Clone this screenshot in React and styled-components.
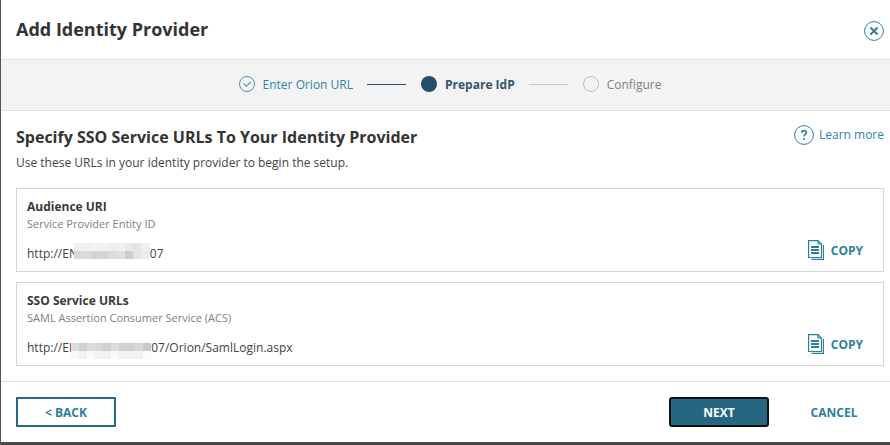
import React from "react";
import styled, { createGlobalStyle } from "styled-components";

const GlobalStyle = createGlobalStyle`
  html, body {
    margin: 0;
    padding: 0;
    background: #fff;
  }
  body {
    font-family: "Open Sans", "Liberation Sans", sans-serif;
    color: #333;
  }
`;

const Page = styled.div`
  width: 890px;
  height: 445px;
  box-sizing: border-box;
  overflow: hidden;
  background: #fff;
  border-left: 1px solid #555;
  border-bottom: 3px solid #484848;
  display: flex;
  flex-direction: column;
`;

const Header = styled.header`
  height: 59px;
  flex: none;
  display: flex;
  justify-content: space-between;
  padding: 0 6px 0 15px;
`;

const Title = styled.h1`
  margin: 20px 0 0;
  font-size: 18px;
  line-height: 18px;
  font-weight: 700;
  color: #333;
`;

const CloseButton = styled.button`
  border: 0;
  background: none;
  padding: 0;
  margin: 21px 0 0;
  width: 20px;
  height: 20px;
  color: #2e7f9c;
`;

const Stepper = styled.nav`
  flex: none;
  height: 48px;
  background: #f3f3f3;
  border-top: 1px solid #e0e0e0;
  border-bottom: 1px solid #e0e0e0;
  display: flex;
  align-items: center;
  justify-content: center;
  padding: 0 0 2px 9px;
`;

const StepLabel = styled.span`
  font-size: 12px;
  margin-left: 8px;
  color: ${(p) => p.$color};
  font-weight: ${(p) => (p.$bold ? 700 : 400)};
`;

const StepLine = styled.span`
  width: 39px;
  height: 1px;
  margin: 1px 15px 0 14px;
  background: ${(p) => p.$color};
`;

const DoneDot = styled.svg`
  width: 16px;
  height: 16px;
  flex: none;
`;

const ActiveDot = styled.span`
  width: 16px;
  height: 16px;
  border-radius: 50%;
  background: #224d6b;
`;

const PendingDot = styled.span`
  width: 14px;
  height: 14px;
  border: 1px solid #bdbdbd;
  border-radius: 50%;
`;

const Content = styled.main`
  flex: 1;
  padding: 0 6px 0 15px;
  display: flex;
  flex-direction: column;
`;

const HeadingRow = styled.div`
  display: flex;
  justify-content: space-between;
  align-items: flex-start;
  margin-top: 14px;
`;

const Heading = styled.h2`
  margin: 1px 0 0;
  font-size: 16px;
  line-height: 22px;
  font-weight: 700;
  color: #333;
`;

const LearnMore = styled.a`
  display: flex;
  align-items: center;
  gap: 5px;
  font-size: 12px;
  line-height: 20px;
  color: #2e86a8;
`;

const HelpIcon = styled.svg`
  width: 20px;
  height: 20px;
`;

const Intro = styled.p`
  margin: 7px 0 0;
  font-size: 12px;
  line-height: 16px;
  color: #444;
`;

const Card = styled.section`
  height: 84px;
  box-sizing: border-box;
  margin-top: ${(p) => p.$top}px;
  border: 1px solid #d6d6d6;
  padding: 10px 10px 0;
  display: flex;
  flex-direction: column;
`;

const CardTitle = styled.h3`
  margin: 0;
  font-size: 12px;
  line-height: 16px;
  font-weight: 700;
  color: #3a3a3a;
`;

const CardSub = styled.div`
  margin-top: 1px;
  font-size: 11px;
  line-height: 16px;
  color: #808080;
`;

const UrlRow = styled.div`
  display: flex;
  align-items: center;
  justify-content: space-between;
  margin-top: 14px;
  padding-right: 10px;
`;

const Url = styled.div`
  display: flex;
  align-items: center;
  font-size: 12px;
  line-height: 16px;
  color: #444;
`;

/* sits over the url text, the blur in the picture covers part of a letter */
const Redaction = styled.span`
  display: grid;
  grid-template-columns: repeat(${(p) => p.$cols}, ${(p) => p.$cell}px);
  grid-auto-rows: 8px;
  height: 16px;
  margin: ${(p) => p.$shift}px 0 ${(p) => -p.$shift}px ${(p) => p.$pull}px;
`;

const Pixel = styled.i`
  display: block;
`;

const CopyButton = styled.button`
  display: flex;
  align-items: center;
  gap: 7px;
  border: 0;
  background: none;
  padding: 0;
  margin-top: -8px;
  font-family: inherit;
  font-size: 12px;
  font-weight: 700;
  color: #2e7f9c;
`;

const CopyIcon = styled.svg`
  width: 16px;
  height: 20px;
`;

const Footer = styled.footer`
  height: 61px;
  flex: none;
  box-sizing: border-box;
  border-top: 1px solid #e0e0e0;
  display: flex;
  align-items: flex-start;
  padding: 15px 11px 0 15px;
`;

const BaseButton = styled.button`
  width: 100px;
  height: 30px;
  box-sizing: border-box;
  padding: 0;
  font-family: inherit;
  font-size: 12px;
  font-weight: 700;
`;

const BackButton = styled(BaseButton)`
  background: #fff;
  border: 2px solid #256a84;
  color: #2e7f9c;
`;

const NextButton = styled(BaseButton)`
  margin-left: auto;
  background: #256780;
  border: 2px solid #111;
  border-radius: 3px;
  color: #fff;
`;

const CancelButton = styled(BaseButton)`
  width: 90px;
  background: none;
  border: 0;
  margin-left: 20px;
  color: #2e7f9c;
`;

const PIXELS_1 = [
  "#f0f0f0", "#f0f0f0", "#f4f4f4", "#f2f2f2", "#eeeeee", "#f0f0f0", "#eaeaea", "#e4e4e4", "#f0f0f0",
  "#d8d8d8", "#dcdcdc", "#d4d4d4", "#d4d4d4", "#dcdcdc", "#e0e0e0", "#cccccc", "#e4e4e4", "#ececec",
];
const PIXELS_2 = [
  "#dcdcdc", "#d0d0d0", "#dcdcdc", "#d8d8d8", "#d0d0d0", "#dcdcdc", "#d0d0d0", "#d0d0d0", "#d8d8d8", "#c8c8c8",
  "#f8f8f8", "#f0f0f0", "#fafafa", "#f4f4f4", "#f0f0f0", "#fafafa", "#f2f2f2", "#f4f4f4", "#f0f0f0", "#fafafa",
];

const Pixels = ({ cols, cell, shift, pull, colors }) => (
  <Redaction $cols={cols} $cell={cell} $shift={shift} $pull={pull}>
    {colors.map((c, i) => (
      <Pixel key={i} style={{ background: c }} />
    ))}
  </Redaction>
);

const Copy = () => (
  <CopyButton type="button">
    <CopyIcon viewBox="0 0 16 20" fill="none" stroke="currentColor" strokeWidth="1.2">
      <path d="M.6 .6H10L13.5 4V17.5H.6Z" />
      <path d="M10 .6V4H13.5" />
      <path d="M15.5 5V19.4H3.5" />
      <path d="M3 7H11M3 10H11M3 13H11" strokeWidth="1.8" />
    </CopyIcon>
    COPY
  </CopyButton>
);

export default function App() {
  return (
    <>
      <GlobalStyle />
      <Page>
        <Header>
          <Title>Add Identity Provider</Title>
          <CloseButton type="button" aria-label="Close">
            <svg viewBox="0 0 20 20" width="20" height="20" fill="none" stroke="currentColor">
              <circle cx="10" cy="10" r="9.4" strokeWidth="1" />
              <path d="M6.5 6.5L13.5 13.5M13.5 6.5L6.5 13.5" strokeWidth="2" />
            </svg>
          </CloseButton>
        </Header>
        <Stepper>
          <DoneDot viewBox="0 0 16 16" fill="none" stroke="#4f94ad">
            <circle cx="8" cy="8" r="7.5" />
            <path d="M4.5 7.5L7.3 10.3L11.7 6" strokeWidth="1.1" />
          </DoneDot>
          <StepLabel $color="#2e86a8">Enter Orion URL</StepLabel>
          <StepLine $color="#224d6b" />
          <ActiveDot />
          <StepLabel $color="#2f5672" $bold>Prepare IdP</StepLabel>
          <StepLine $color="#cccccc" />
          <PendingDot />
          <StepLabel $color="#808080">Configure</StepLabel>
        </Stepper>
        <Content>
          <HeadingRow>
            <Heading>Specify SSO Service URLs To Your Identity Provider</Heading>
            <LearnMore>
              <HelpIcon viewBox="0 0 20 20" fill="none" stroke="#2e7f9c">
                <circle cx="10" cy="10" r="9.4" />
                <path d="M7.6 7.8C7.6 6.4 8.7 5.6 10 5.6C11.4 5.6 12.4 6.4 12.4 7.7C12.4 9.4 10 9.6 10 11.6" strokeWidth="1.6" />
                <path d="M10 13V14.8" strokeWidth="1.8" />
              </HelpIcon>
              Learn more
            </LearnMore>
          </HeadingRow>
          <Intro>Use these URLs in your identity provider to begin the setup.</Intro>
          <Card $top={17}>
            <CardTitle>Audience URI</CardTitle>
            <CardSub>Service Provider Entity ID</CardSub>
            <UrlRow>
              <Url>
                http://EN
                <Pixels cols={9} cell={8.44} shift={-3} pull={-4} colors={PIXELS_1} />
                07
              </Url>
              <Copy />
            </UrlRow>
          </Card>
          <Card $top={10}>
            <CardTitle>SSO Service URLs</CardTitle>
            <CardSub>SAML Assertion Consumer Service (ACS)</CardSub>
            <UrlRow>
              <Url>
                http://EI
                <Pixels cols={10} cell={8} shift={3} pull={-1} colors={PIXELS_2} />
                07/Orion/SamlLogin.aspx
              </Url>
              <Copy />
            </UrlRow>
          </Card>
        </Content>
        <Footer>
          <BackButton type="button">&lt; BACK</BackButton>
          <NextButton type="button">NEXT</NextButton>
          <CancelButton type="button">CANCEL</CancelButton>
        </Footer>
      </Page>
    </>
  );
}
